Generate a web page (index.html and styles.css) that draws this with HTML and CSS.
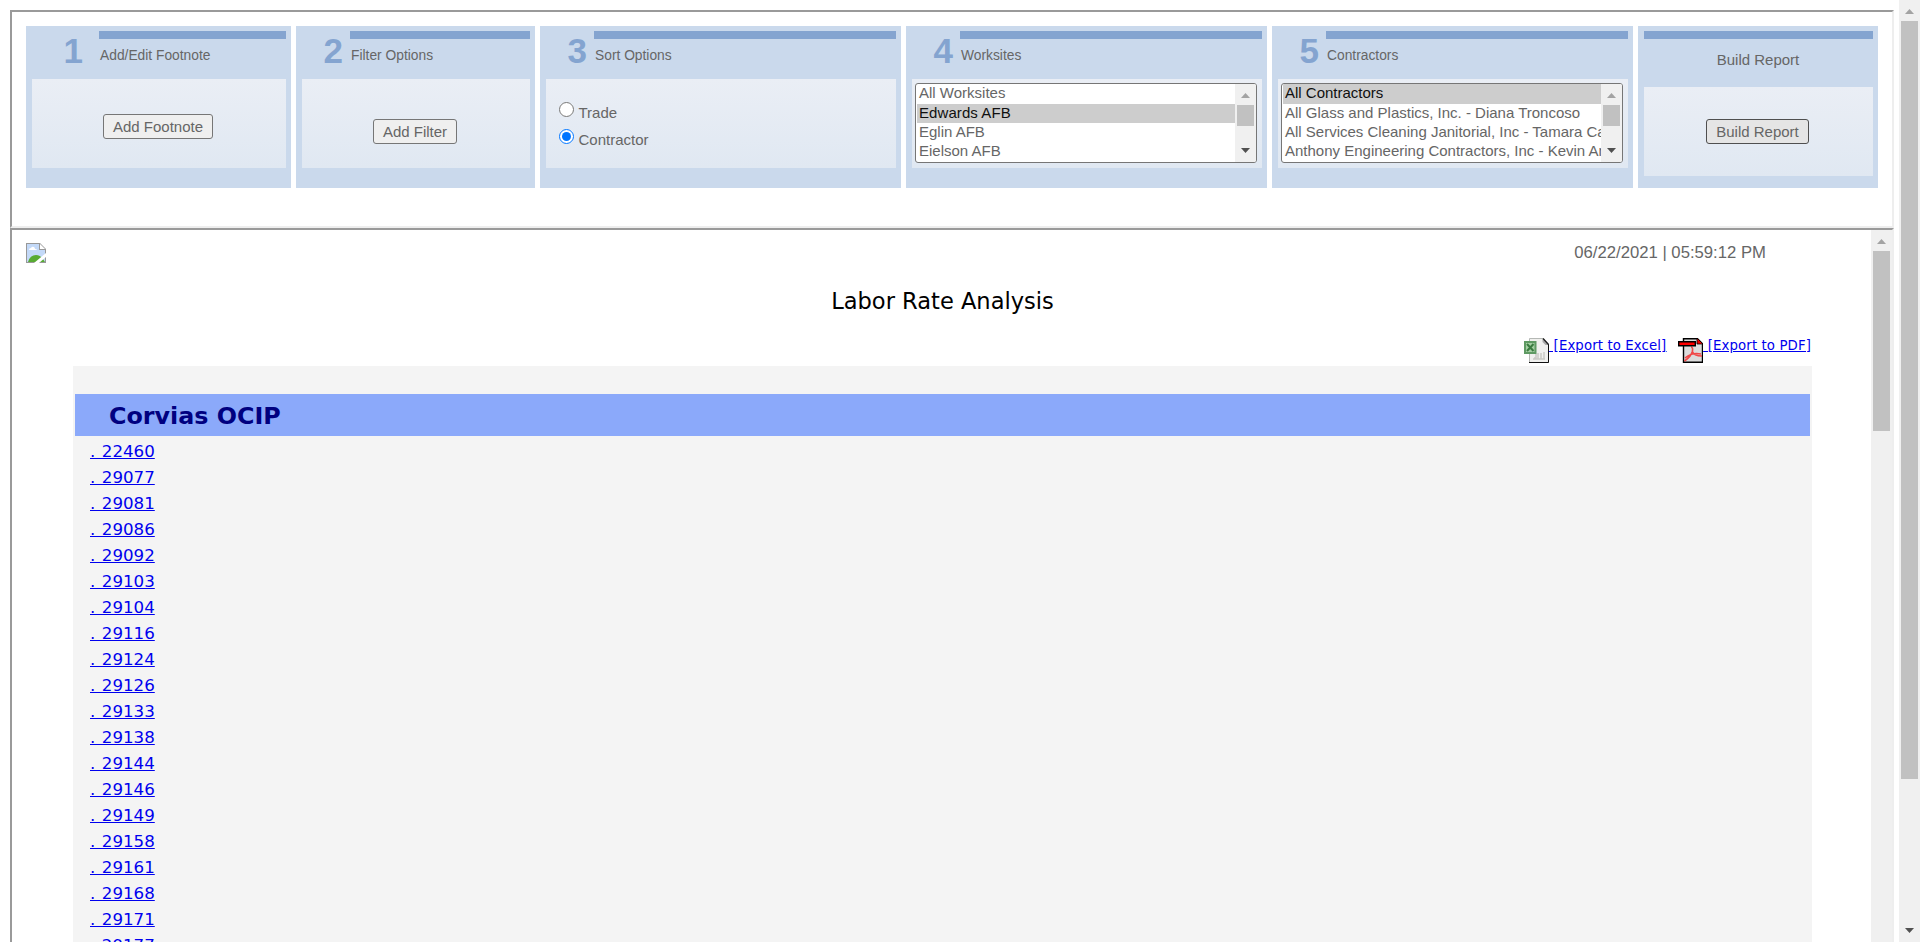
FILE: index.html
```html
<!DOCTYPE html>
<html lang="en">
<head>
<meta charset="utf-8">
<title>Labor Rate Analysis</title>
<link rel="stylesheet" href="styles.css">
</head>
<body>
<div class="page">
  <main class="frames">
    <section class="frame frame-top">
      <div class="card card-footnote">
        <header class="head"><span class="num">1</span><div class="bar-label"><div class="bar"></div><span class="label">Add/Edit Footnote</span></div></header>
        <div class="panel center"><button class="btn btn-footnote">Add Footnote</button></div>
      </div>
      <div class="card card-filter">
        <header class="head"><span class="num">2</span><div class="bar-label"><div class="bar"></div><span class="label">Filter Options</span></div></header>
        <div class="panel center low"><button class="btn btn-filter">Add Filter</button></div>
      </div>
      <div class="card card-wide">
        <header class="head"><span class="num">3</span><div class="bar-label"><div class="bar"></div><span class="label">Sort Options</span></div></header>
        <div class="panel sorts">
          <label class="sort"><input type="radio" name="sort"><span>Trade</span></label>
          <label class="sort"><input type="radio" name="sort" checked><span>Contractor</span></label>
        </div>
      </div>
      <div class="card card-wide">
        <header class="head"><span class="num">4</span><div class="bar-label"><div class="bar"></div><span class="label">Worksites</span></div></header>
        <div class="panel lists">
          <div class="listbox">
            <div class="options">
              <div class="option">All Worksites</div>
              <div class="option selected wide-text">Edwards AFB</div>
              <div class="option">Eglin AFB</div>
              <div class="option">Eielson AFB</div>
            </div>
            <div class="scroll"><svg class="arrow" viewBox="0 0 9 5"><path d="M4.500 0L9 5H0z" fill="#a3a3a3"/></svg><div class="thumb"></div><svg class="arrow down" viewBox="0 0 9 5"><path d="M0 0h9L4.500 5z" fill="#505050"/></svg></div>
          </div>
        </div>
      </div>
      <div class="card card-wide">
        <header class="head"><span class="num">5</span><div class="bar-label"><div class="bar"></div><span class="label">Contractors</span></div></header>
        <div class="panel lists">
          <div class="listbox">
            <div class="options">
              <div class="option selected">All Contractors</div>
              <div class="option">All Glass and Plastics, Inc. - Diana Troncoso</div>
              <div class="option">All Services Cleaning Janitorial, Inc - Tamara Ca</div>
              <div class="option">Anthony Engineering Contractors, Inc - Kevin An</div>
            </div>
            <div class="scroll"><svg class="arrow" viewBox="0 0 9 5"><path d="M4.500 0L9 5H0z" fill="#a3a3a3"/></svg><div class="thumb"></div><svg class="arrow down" viewBox="0 0 9 5"><path d="M0 0h9L4.500 5z" fill="#505050"/></svg></div>
          </div>
        </div>
      </div>
      <div class="card card-build">
        <div class="bar"></div>
        <div class="build-label">Build Report</div>
        <div class="panel center"><button class="btn btn-build">Build Report</button></div>
      </div>
    </section>

    <section class="frame frame-report">
      <div class="report">
        <div class="report-top">
          <svg class="broken" viewBox="0 0 20 20">
            <path d="M0 0h14l6 6v14H0z" fill="#989898"/>
            <path d="M1 1h12v6h6v12H1z" fill="#c3d9f8"/>
            <path d="M3 7q0-2 2-2 1-2 3-1 1 1 1 2 2 0 2 1z" fill="#fff"/>
            <path d="M2 19q2-7 8-7 4 0 7 4l2 3z" fill="#58ab32"/>
            <path d="M14 1v5h5z" fill="#fff"/>
            <path d="M15 0h5v5z" fill="#fff"/>
            <path d="M8 20l12-10v4l-7 6z" fill="#fff"/>
          </svg>
          <span class="stamp">06/22/2021 | 05:59:12 PM</span>
        </div>
        <h1 class="title">Labor Rate Analysis</h1>
        <div class="exports">
          <a class="export" href="#"><svg class="file" viewBox="0 0 25 25">
            <path d="M5.500.5h14l5 6v18h-19z" fill="#f0f0ee" stroke="#b5b8b5"/>
            <path d="M5 24.500h19.500V6" fill="none" stroke="#111"/>
            <path d="M18.500 1l6 6h-3l-3-3z" fill="#aaa"/><path d="M19 .5l5.500 6" stroke="#222" stroke-width="1.400"/>
            <path d="M10 20h2v-4m2 5v-6m3 6v-6m3 6v-7M9 21h12" fill="none" stroke="#c9c9c5" stroke-width="1.500"/>
            <path d="M0 3h12.500v13H0z" fill="#5f9a63"/><path d="M2 5h8.500v9H2z" fill="#a5cfa3"/>
            <path d="M3 6l6.500 7M9.500 6L3 13" stroke="#3a7c40" stroke-width="2"/>
          </svg><span class="link-text">&nbsp;[Export to Excel]</span></a>
          <a class="export" href="#"><svg class="file" viewBox="0 0 25 25">
            <path d="M5.500.7h14l5 5v18.600h-19z" fill="#dcdcdc" stroke="#000" stroke-width="1.400"/>
            <path d="M19 0l6 6h-6z" fill="#e00" stroke="#000" stroke-width=".8"/>
            <path d="M13 9q2 0 1.500 4-1 5-8 10M14 13q2 5 10 5M7 20q7-6 16-4" fill="none" stroke="#f04848" stroke-width="1.600"/>
            <path d="M.7 3.700h16.600v4H.7z" fill="#f00" stroke="#000" stroke-width="1.400"/>
          </svg><span class="link-text">&nbsp;[Export to PDF]</span></a>
        </div>
        <div class="sheet">
          <h2 class="group">Corvias OCIP</h2>
          <ul class="rows">
            <li><a href="#">. 22460</a></li><li><a href="#">. 29077</a></li><li><a href="#">. 29081</a></li><li><a href="#">. 29086</a></li><li><a href="#">. 29092</a></li><li><a href="#">. 29103</a></li><li><a href="#">. 29104</a></li><li><a href="#">. 29116</a></li><li><a href="#">. 29124</a></li><li><a href="#">. 29126</a></li><li><a href="#">. 29133</a></li><li><a href="#">. 29138</a></li><li><a href="#">. 29144</a></li><li><a href="#">. 29146</a></li><li><a href="#">. 29149</a></li><li><a href="#">. 29158</a></li><li><a href="#">. 29161</a></li><li><a href="#">. 29168</a></li><li><a href="#">. 29171</a></li><li><a href="#">. 29177</a></li>
          </ul>
        </div>
      </div>
      <div class="scroll scroll-report"><svg class="arrow" viewBox="0 0 9 5"><path d="M4.500 0L9 5H0z" fill="#a3a3a3"/></svg><div class="thumb"></div></div>
    </section>
  </main>
  <div class="scroll scroll-page"><svg class="arrow" viewBox="0 0 9 5"><path d="M4.500 0L9 5H0z" fill="#a3a3a3"/></svg><div class="thumb"></div><svg class="arrow down" viewBox="0 0 9 5"><path d="M0 0h9L4.500 5z" fill="#505050"/></svg></div>
</div>
</body>
</html>
```
FILE: styles.css
```css
* { box-sizing: border-box; }
body { margin: 0; height: 942px; overflow: hidden; background: #fff; color: #666; font-family: "Liberation Sans", Arial, sans-serif; font-size: 15px; }
.page { display: flex; height: 942px; overflow: hidden; }
.frames { flex: 1; padding: 10px 5px 0 10px; }
.frame { border: 2px solid; border-color: #9a9a9a #eee #eee #9a9a9a; display: flex; }
.frame-top { height: 218px; padding: 14px; gap: 5px; }
.frame-report { height: 760px; }

.card { height: 162px; background: #cad9ec; padding: 5px 5px 0 6px; }
.card-footnote { width: 265px; --num: 67px; --num-gap: 16px; }
.card-filter { width: 239px; --num: 48px; }
.card-wide { width: 361px; --num: 48px; }
.card-build { width: 240px; }
.head { display: flex; height: 48px; }
.num { width: var(--num); padding-right: var(--num-gap, 7px); text-align: right; font-weight: bold; font-size: 35px; line-height: 39px; color: #84a4d0; }
.bar-label { flex: 1; }
.bar { height: 8px; background: #84a4d0; }
.label { display: block; padding: 9px 0 0 1px; font-size: 13.800px; line-height: 16px; }
.build-label { height: 48px; text-align: center; line-height: 42px; padding-right: 1px; }
.panel { height: 89px; background: linear-gradient(#eaeef5, #e0e8f2); }
.center { display: flex; justify-content: center; align-items: flex-start; padding: 35px 2px 0 0; }
.card-build .center { padding-top: 32px; }
.low { padding-top: 40px; }
.btn { height: 25px; padding: 0; border: 1px solid #767676; border-radius: 3px; background: #efefef; color: #666; font: 15px "Liberation Sans", Arial, sans-serif; white-space: nowrap; }
.btn-footnote { width: 110px; }
.btn-filter { width: 84px; }
.btn-build { width: 103px; background: #e5e5e5; border-color: #4f4f4f; }
.sorts { padding: 23px 0 0 13px; }
.sort { display: flex; height: 27px; gap: 4.500px; }
.sort input { width: 15px; height: 15px; margin: 0; }
.sort span { line-height: 22px; }
.lists { padding: 4px 5px 0 3px; }
.listbox { height: 80px; border: 1px solid #767676; border-radius: 3px; background: #fff; display: flex; overflow: hidden; }
.options { flex: 1; min-width: 0; overflow: hidden; padding-left: 1px; }
.option { height: 19px; padding-left: 2px; line-height: 18px; white-space: nowrap; overflow: hidden; }
.option:first-child { height: 20px; }
.selected { background: #cdcdcd; color: #101010; }

.scroll { width: 21px; flex: none; background: #f0f0f0; display: flex; flex-direction: column; align-items: center; }
.arrow { width: 9px; height: 5px; margin-top: 9px; flex: none; }
.thumb { width: 17px; height: 21px; margin-top: 7px; background: #c1c1c1; flex: none; }
.down { margin: auto 0 9px; }
.scroll-report .thumb { height: 180px; }
.scroll-page .thumb { height: 758px; }

.report { flex: 1; padding: 13px 59px 0 14px; }
.report-top { display: flex; justify-content: space-between; height: 44px; padding-right: 46px; }
.broken { width: 20px; height: 20px; }
.stamp { font-size: 16.700px; line-height: 19px; }
.title { margin: 0; padding-left: 47px; height: 51px; color: #000; text-align: center; font: 22.550px/28px "DejaVu Sans", sans-serif; }
.exports { display: flex; justify-content: flex-end; gap: 12px; height: 28px; padding-right: 1px; }
.export { display: flex; height: 25px; color: #00e; font: 13.300px/16px "DejaVu Sans", sans-serif; letter-spacing: 0.110px; }
.file { width: 25px; height: 25px; }
.link-text { text-decoration: underline; }
.sheet { margin-left: 47px; padding: 28px 2px 0; height: 620px; background: #f4f4f4; }
.group { margin: 0; height: 42px; padding-left: 34px; background: #8ba9fa; color: #000080; font: bold 23.800px/45px "DejaVu Sans", sans-serif; }
.rows { list-style: none; margin: 0; padding: 3px 0 0 15px; font: 16.670px/26px "DejaVu Sans", sans-serif; word-spacing: 1.200px; }
.rows li { height: 26px; }
.rows a { color: #00e; }
.wide-text { letter-spacing: 0.080px; }
```
